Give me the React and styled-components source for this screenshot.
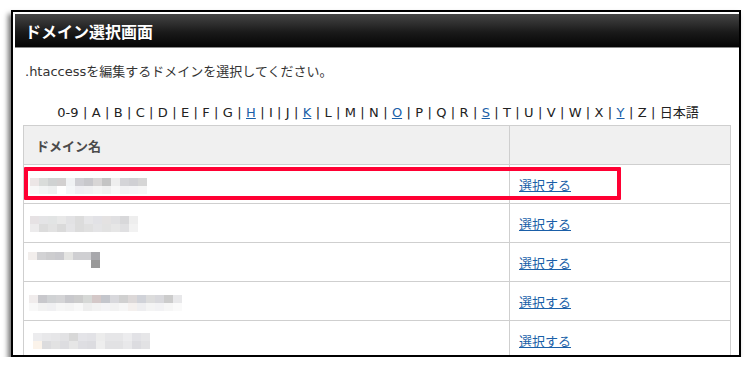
import React from "react";
import styled, { createGlobalStyle } from "styled-components";

const GlobalStyle = createGlobalStyle`
  body {
    margin: 0;
    background: #fff;
    font-family: "DejaVu Sans", "Noto Sans CJK JP", sans-serif;
    color: #333;
  }
`;

const Frame = styled.div`
  margin: 10px 0 0 11px;
  width: 724px;
  height: 341px;
  border: 2px solid #000;
  padding: 2px 0 0 2px;
  box-sizing: content-box;
  overflow: hidden;
  background: #fff;
  box-shadow: -3px 4px 5px rgba(0, 0, 0, 0.55);
`;

const TitleBar = styled.div`
  height: 33px;
  display: flex;
  align-items: center;
  padding-left: 10px;
  background: linear-gradient(#454545, #1a1a1a 55%, #050505);
  border-bottom: 1px solid #8a8a8a;

  h1 {
    margin: 0;
    font-size: 16px;
    font-weight: bold;
    color: #fff;
    font-family: "Noto Sans CJK JP", sans-serif;
  }
`;

const Content = styled.div`
  padding: 15px 6px 0 8px;
`;

const Lead = styled.p`
  margin: 0 0 0 2px;
  font-size: 13px;
  line-height: 18px;
`;

const Nav = styled.div`
  margin-top: 23px;
  text-align: center;
  font-size: 13px;
  line-height: 18px;
  word-spacing: 0.22px;
  color: #222;

  a {
    color: #1a5fa8;
    text-decoration: underline;
  }
`;

const TableWrap = styled.div`
  position: relative;
  margin-top: 3px;
`;

const Table = styled.table`
  width: 708px;
  border-collapse: collapse;
  font-size: 13px;

  th,
  td {
    border: 1px solid #cfcfcf;
    height: 38px;
    padding: 0;
    text-align: left;
    vertical-align: middle;
  }

  th {
    background: #f0f0f0;
    font-weight: 600;
    color: #4a4a4a;
  }
`;

const NameHead = styled.th`
  width: 473px;
  padding-left: 12px !important;
`;

const LinkCell = styled.td`
  padding-left: 9px !important;

  a {
    color: #1a5fa8;
    text-decoration: underline;
  }
`;

const Mosaic = styled.div`
  display: grid;
  grid-template-columns: repeat(${(p) => p.$cols}, 9px);
  grid-auto-rows: 8px;
  margin-left: ${(p) => p.$x}px;
  margin-top: ${(p) => p.$y}px;
`;

const Cell = styled.span`
  background: ${(p) => p.$c};
`;

const Highlight = styled.div`
  position: absolute;
  left: 1px;
  top: 42px;
  width: 589px;
  height: 25px;
  border: 4px solid #ff0033;
  border-radius: 1px;
  pointer-events: none;
`;

const letters = [
  "0-9", "A", "B", "C", "D", "E", "F", "G", "H", "I", "J", "K", "L", "M",
  "N", "O", "P", "Q", "R", "S", "T", "U", "V", "W", "X", "Y", "Z", "日本語",
];
const linked = ["H", "K", "O", "S", "Y"];

const rows = [
  {
    x: 6, y: 4,
    top: ["#ece6e6", "#d9dcda", "#cfd2d2", "#d2d0d0", "#f0f2f4", "#cfcfd4", "#c8c8cc", "#d8d6d6", "#c4c4c4", "#eeeeee", "#d4d4d8", "#d0d0d4", "#d6d6d6"],
    bottom: ["#f8f8f8", "#f2f4f4", "#eef0f0", "#ffffff", "#f4f6f8", "#eeeef2", "#f0f0f2", "#f4f4f4", "#f0f0f0", "#f8f8f8", "#f2f2f4", "#f4f4f6", "#f6f6f6"],
  },
  {
    x: 6, y: 2,
    top: ["#e6e2e4", "#e4e4e6", "#e2e4e4", "#e8e8e8", "#e2e2e4", "#dcdcdc", "#e6e6e8", "#e2e2e6", "#e4e2e2", "#e0e0e2", "#d8d8da", "#eeeeee"],
    bottom: ["#ecebec", "#dcdcdc", "#e2e2e2", "#dadada", "#e4e4e6", "#dcdcdc", "#e0e0e0", "#e4e4e6", "#e2e2e2", "#e6e6e6", "#e0e0e2", "#f2f2f2"],
  },
  {
    x: 4, y: -4,
    top: ["#f2eeec", "#d2d2d4", "#cdcdcf", "#cacace", "#e4e4e2", "#cfcfd2", "#cfcfd2", "#a8a8ac"],
    bottom: ["#fff", "#fff", "#fff", "#fff", "#fff", "#fff", "#fff", "#999"],
  },
  {
    x: 5, y: 4,
    top: ["#f0ecec", "#c8c8cc", "#d0d2d4", "#d4d4d6", "#c8c8cc", "#cccccc", "#d6d8d6", "#d4c8c8", "#c4c6cc", "#d8d8dc", "#d0d0d0", "#dcd8d8", "#d0d2d8", "#dcdcdc", "#d8d8dc", "#cccccc", "#e8e8ea"],
    bottom: ["#f8f8f8", "#f2f2f2", "#f0f0f2", "#f6f6f6", "#f4f4f4", "#f8f8f8", "#eeeeee", "#f2f2f2", "#f4f4f6", "#f2f2f2", "#f6f6f6", "#f4f0ee", "#eeeef0", "#f4f4f4", "#f2f2f4", "#f6f6f6", "#fafafa"],
  },
  {
    x: 9, y: 2,
    top: ["#ececee", "#e8e8ea", "#e6e6e8", "#e2e2e4", "#d8d8d8", "#e4e4e8", "#e2e2e6", "#ececec", "#e6e6e8", "#e6e6e8", "#ececee", "#e2e2e6", "#e6e6e8"],
    bottom: ["#fbf3ea", "#dcdcde", "#e2e2e2", "#dddde0", "#e6e6e6", "#dedee2", "#dcdce0", "#eeeeee", "#e2e2e4", "#e2e2e4", "#e8e8ea", "#dcdce0", "#e2e2e4"],
  },
];

function Pixelated({ row }) {
  const cells = [...row.top, ...row.bottom];
  return (
    <Mosaic $cols={row.top.length} $x={row.x} $y={row.y}>
      {cells.map((c, i) => (
        <Cell key={i} $c={c} />
      ))}
    </Mosaic>
  );
}

export default function App() {
  return (
    <>
      <GlobalStyle />
      <Frame>
        <TitleBar>
          <h1>ドメイン選択画面</h1>
        </TitleBar>
        <Content>
          <Lead>.htaccessを編集するドメインを選択してください。</Lead>
          <Nav>
            {letters.map((l, i) => (
              <React.Fragment key={l}>
                {linked.includes(l) ? <a href="#">{l}</a> : l}
                {i < letters.length - 1 ? " | " : ""}
              </React.Fragment>
            ))}
          </Nav>
          <TableWrap>
            <Table>
              <thead>
                <tr>
                  <NameHead>ドメイン名</NameHead>
                  <th />
                </tr>
              </thead>
              <tbody>
                {rows.map((row, i) => (
                  <tr key={i}>
                    <td>
                      <Pixelated row={row} />
                    </td>
                    <LinkCell>
                      <a href="#">選択する</a>
                    </LinkCell>
                  </tr>
                ))}
              </tbody>
            </Table>
            <Highlight />
          </TableWrap>
        </Content>
      </Frame>
    </>
  );
}
